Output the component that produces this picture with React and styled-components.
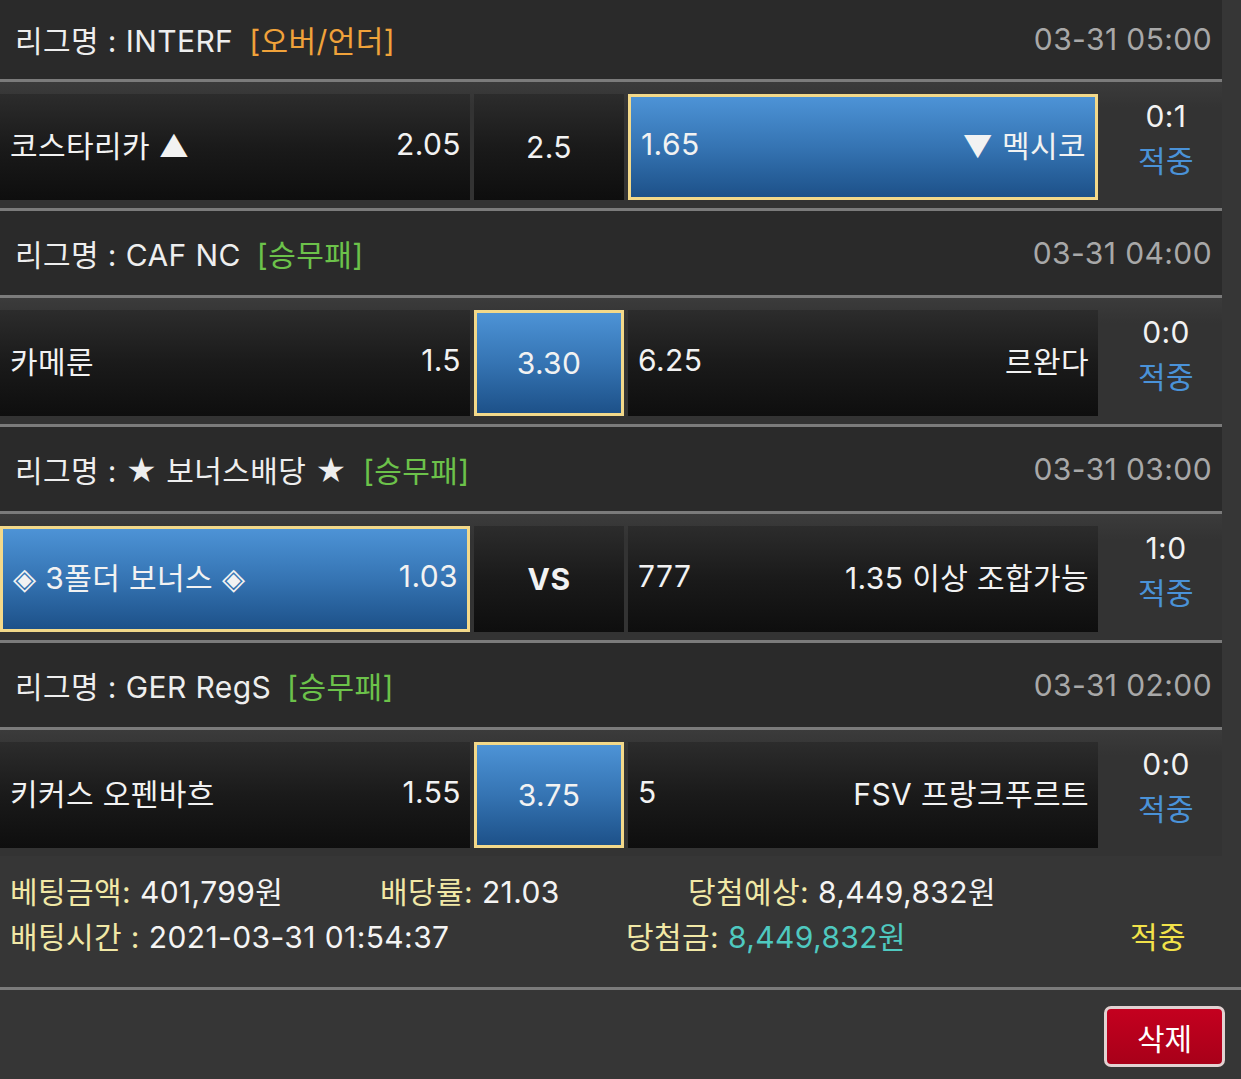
import React from "react";
import styled, { createGlobalStyle } from "styled-components";

const GlobalStyle = createGlobalStyle`
  html, body {
    margin: 0;
    padding: 0;
    background: #363636;
  }
  body {
    font-family: Inter, "Noto Sans CJK KR", sans-serif;
    letter-spacing: 0.4px;
    color: #eeeeee;
  }
`;

const games = [
  {
    league: "INTERF",
    type: "[오버/언더]",
    typeColor: "#f0a23a",
    time: "03-31 05:00",
    home: "코스타리카 ▲",
    homeOdd: "2.05",
    mid: "2.5",
    awayOdd: "1.65",
    away: "▼ 멕시코",
    pick: "away",
    score: "0:1",
    first: true,
  },
  {
    league: "CAF NC",
    type: "[승무패]",
    typeColor: "#6cc24a",
    time: "03-31 04:00",
    home: "카메룬",
    homeOdd: "1.5",
    mid: "3.30",
    awayOdd: "6.25",
    away: "르완다",
    pick: "mid",
    score: "0:0",
  },
  {
    league: "★ 보너스배당 ★",
    type: "[승무패]",
    typeColor: "#6cc24a",
    time: "03-31 03:00",
    home: "◈ 3폴더 보너스 ◈",
    homeOdd: "1.03",
    mid: "VS",
    midBold: true,
    awayOdd: "777",
    away: "1.35 이상 조합가능",
    pick: "home",
    score: "1:0",
  },
  {
    league: "GER RegS",
    type: "[승무패]",
    typeColor: "#6cc24a",
    time: "03-31 02:00",
    home: "키커스 오펜바흐",
    homeOdd: "1.55",
    mid: "3.75",
    awayOdd: "5",
    away: "FSV 프랑크푸르트",
    pick: "mid",
    score: "0:0",
  },
];

function App() {
  return (
    <Page>
      <GlobalStyle />
      <List>
        {games.map((g, i) => (
          <Block key={i}>
            <Header $first={g.first}>
              <League>
                리그명 : {g.league}
                <Type $color={g.typeColor}>{g.type}</Type>
              </League>
              <Time>{g.time}</Time>
            </Header>
            <Divider />
            <MatchRow>
              <Cell $active={g.pick === "home"}>
                <span>{g.home}</span>
                <span>{g.homeOdd}</span>
              </Cell>
              <MidCell $active={g.pick === "mid"} $bold={g.midBold}>
                {g.mid}
              </MidCell>
              <Cell $active={g.pick === "away"}>
                <span>{g.awayOdd}</span>
                <span>{g.away}</span>
              </Cell>
              <ScoreCol>
                <Score>{g.score}</Score>
                <Hit>적중</Hit>
              </ScoreCol>
            </MatchRow>
            {i < games.length - 1 && <Divider />}
          </Block>
        ))}
      </List>
      <Summary>
        <SumRow>
          <SumItem $width="370px">
            <Label>베팅금액:</Label> 401,799원
          </SumItem>
          <SumItem $width="308px">
            <Label>배당률:</Label> 21.03
          </SumItem>
          <SumItem>
            <Label>당첨예상:</Label> 8,449,832원
          </SumItem>
        </SumRow>
        <SumRow>
          <SumItem $width="616px">
            <Label>배팅시간 :</Label> 2021-03-31 01:54:37
          </SumItem>
          <SumItem $width="504px">
            <Label>당첨금:</Label> <Won>8,449,832원</Won>
          </SumItem>
          <Result>적중</Result>
        </SumRow>
      </Summary>
      <WideDivider />
      <Actions>
        <DeleteButton>삭제</DeleteButton>
      </Actions>
    </Page>
  );
}

export default App;

const Page = styled.div`
  width: 1241px;
  min-height: 1079px;
  background: #363636;
`;

const List = styled.div`
  width: 1222px;
`;

const Block = styled.div`
  display: flex;
  flex-direction: column;
`;

const Header = styled.div`
  height: ${(p) => (p.$first ? "79px" : "84px")};
  padding: ${(p) => (p.$first ? "0 10px 2px 15px" : "0 10px 0 15px")};
  box-sizing: border-box;
  background: #2a2a2a;
  display: flex;
  align-items: center;
  justify-content: space-between;
  font-size: 30px;
`;

const League = styled.div`
  color: #eeeeee;
`;

const Type = styled.span`
  color: ${(p) => p.$color};
  margin-left: 16px;
`;

const Time = styled.div`
  color: #a8a8a8;
`;

const Divider = styled.div`
  height: 3px;
  background: #7b7b7b;
`;

const WideDivider = styled.div`
  height: 3px;
  background: #7b7b7b;
  width: 1241px;
`;

const MatchRow = styled.div`
  height: 126px;
  box-sizing: border-box;
  padding: 12px 0 10px 0;
  background: linear-gradient(#3b3b3b, #333333 20%, #333333);
  display: grid;
  grid-template-columns: 470px 150px 470px 1fr;
  column-gap: 4px;
  font-size: 30px;
`;

const Cell = styled.div`
  display: flex;
  align-items: center;
  justify-content: space-between;
  box-sizing: border-box;
  padding: 0 9px 6px 10px;
  color: #f2f2f2;
  background: ${(p) =>
    p.$active
      ? "linear-gradient(#4d93d6, #3574b3 50%, #1d5189)"
      : "linear-gradient(#2c2c2c, #1a1a1a 50%, #0e0e0e)"};
  border: ${(p) => (p.$active ? "3px solid #f3d98a" : "none")};
`;

const MidCell = styled(Cell)`
  justify-content: center;
  padding: 0;
  font-weight: ${(p) => (p.$bold ? 700 : 400)};
`;

const ScoreCol = styled.div`
  display: flex;
  flex-direction: column;
  align-items: center;
  justify-content: center;
  padding: 0 0 16px 8px;
  line-height: 45px;
`;

const Score = styled.div`
  color: #f2f2f2;
`;

const Hit = styled.div`
  color: #4a92d8;
`;

const Summary = styled.div`
  padding: 14px 0 27px 10px;
  font-size: 30px;
  line-height: 45px;
  color: #f4f4f4;
`;

const SumRow = styled.div`
  display: flex;
  align-items: center;
`;

const SumItem = styled.div`
  width: ${(p) => p.$width || "auto"};
  white-space: nowrap;
`;

const Label = styled.span`
  color: #f1e8a6;
`;

const Won = styled.span`
  color: #4fc9c0;
`;

const Result = styled.div`
  color: #f2e24a;
`;

const Actions = styled.div`
  display: flex;
  justify-content: flex-end;
  padding: 16px 16px 0 0;
`;

const DeleteButton = styled.button`
  width: 121px;
  height: 61px;
  box-sizing: border-box;
  border: 3px solid #e2d2d2;
  border-radius: 7px;
  background: linear-gradient(#c4001f, #a80019);
  color: #ffffff;
  font-family: Inter, "Noto Sans CJK KR", sans-serif;
  font-size: 30px;
  padding: 0;
`;
